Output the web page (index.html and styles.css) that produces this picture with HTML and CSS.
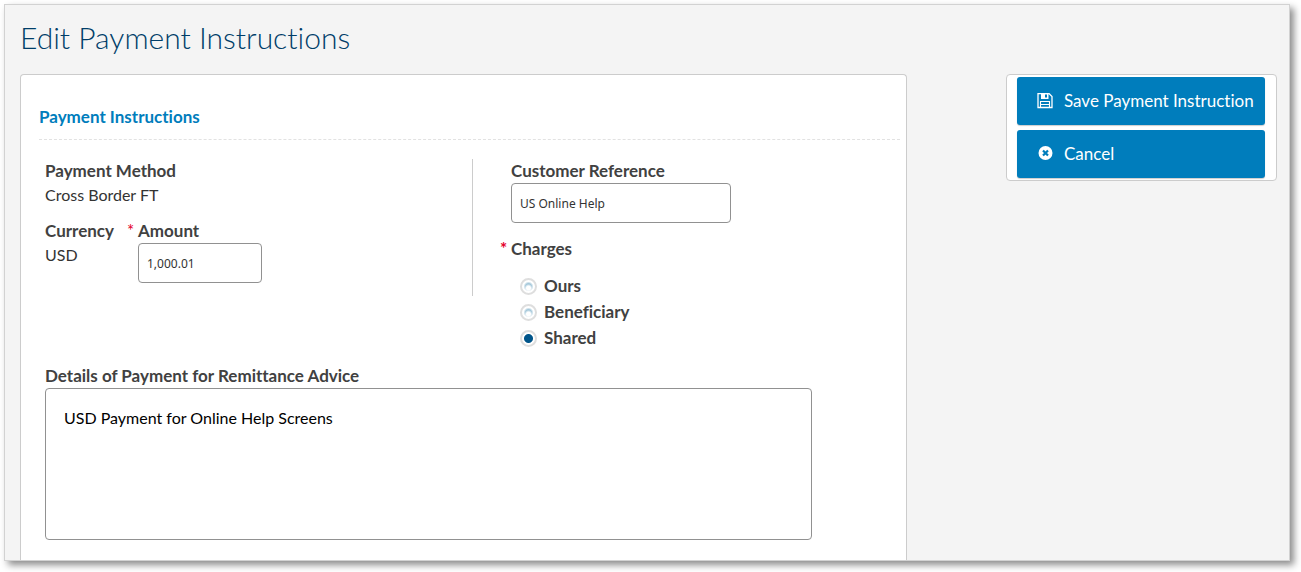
FILE: index.html
```html
<!DOCTYPE html>
<html lang="en">
<head>
<meta charset="utf-8">
<meta name="viewport" content="width=device-width, initial-scale=1">
<title>Edit Payment Instructions</title>
<link rel="stylesheet" href="styles.css">
</head>
<body>
<div class="frame">
  <h1 class="title">Edit Payment Instructions</h1>
  <form class="layout">
    <main class="panel">
      <h2 class="section-title">Payment Instructions</h2>
      <div class="content">
        <div class="columns">
          <div class="col-left">
            <div class="field">
              <span class="label">Payment Method</span>
              <span class="value">Cross Border FT</span>
            </div>
            <div class="money">
              <div class="field currency">
                <span class="label">Currency</span>
                <span class="value">USD</span>
              </div>
              <div class="field required">
                <label class="label" for="amount">Amount</label>
                <input class="input amount" id="amount" type="text" value="1,000.01" required>
              </div>
            </div>
          </div>
          <div class="col-right">
            <div class="field">
              <label class="label" for="reference">Customer Reference</label>
              <input class="input reference" id="reference" type="text" value="US Online Help">
            </div>
            <fieldset class="charges">
              <legend class="label required">Charges</legend>
              <label class="option"><input class="radio" type="radio" name="charges"> Ours</label>
              <label class="option"><input class="radio" type="radio" name="charges"> Beneficiary</label>
              <label class="option"><input class="radio" type="radio" name="charges" checked> Shared</label>
            </fieldset>
          </div>
        </div>
        <div class="field">
          <label class="label" for="details">Details of Payment for Remittance Advice</label>
          <textarea class="details" id="details">USD Payment for Online Help Screens</textarea>
        </div>
      </div>
    </main>
    <aside class="actions">
      <button class="action" type="button">
        <svg class="icon" viewBox="0 0 16 16" aria-hidden="true">
          <path d="M1 0.5H12L15 3.5V14.5H1Z" fill="none" stroke="#fff" stroke-width="1.3"/>
          <path d="M4 0.5H11.5V6H4Z" fill="#fff"/>
          <path d="M8 1.5H10V4.5H8Z" fill="#007dbc"/>
          <path d="M3.5 14.5V8.5H12.5V14.5M4 11.5H12" fill="none" stroke="#fff" stroke-width="1.1"/>
        </svg>
        Save Payment Instruction
      </button>
      <button class="action" type="button">
        <svg class="icon" viewBox="0 0 16 16" aria-hidden="true">
          <circle cx="8.5" cy="7" r="7" fill="#fff"/>
          <path d="M6 4.5L11 9.5M11 4.5L6 9.5" fill="none" stroke="#007dbc" stroke-width="2.2"/>
        </svg>
        Cancel
      </button>
    </aside>
  </form>
</div>
</body>
</html>
```
FILE: styles.css
```css
* {
  box-sizing: border-box;
}

body {
  margin: 0;
  padding: 4px 11px 11px 4px;
  height: 100vh;
  background: #fff;
  color: #333;
  font: 16px/24px Lato, sans-serif;
  font-variant-ligatures: none;
}

.frame {
  display: flex;
  flex-direction: column;
  height: 100%;
  padding: 0 12px 0 15px;
  overflow: hidden;
  background: #f4f4f4;
  border: 1px solid #d2d2d2;
  box-shadow: 4px 4px 7px rgba(0, 0, 0, 0.45);
}

.title {
  margin: 0 0 5px;
  color: #003e69;
  font-size: 30px;
  font-weight: 300;
  line-height: 64px;
}

.layout {
  display: flex;
  flex: 1;
  gap: 99px;
  min-height: 0;
}

.panel {
  flex: 1;
  min-width: 0;
  padding: 30px 6px 0 18px;
  background: #fff;
  border: 1px solid #ccc;
  border-bottom: 0;
  border-radius: 4px 4px 0 0;
}

.section-title {
  margin: 0;
  padding-bottom: 10px;
  border-bottom: 1px dashed #e2e2e2;
  color: #007dbc;
  font-size: 17px;
  font-weight: 700;
  line-height: 24px;
}

.content {
  padding: 19px 88px 0 6px;
}

.columns {
  display: flex;
  height: 205px;
}

.col-left {
  display: flex;
  flex-direction: column;
  gap: 12px;
  width: 428px;
  height: 137px;
  border-right: 1px solid #ccc;
}

.col-right {
  padding-left: 38px;
}

.field {
  display: flex;
  flex-direction: column;
  align-items: flex-start;
}

.label {
  color: #414141;
  font-size: 17px;
  font-weight: 700;
}

.value {
  font-size: 16px;
}

.money {
  display: flex;
}

.currency {
  width: 93px;
}

.required {
  position: relative;
}

.required::before {
  content: "*";
  position: absolute;
  left: -11px;
  top: 0;
  color: #e4002b;
  font-size: 17px;
}

.input {
  height: 40px;
  padding: 0 8px;
  border: 1px solid #919191;
  border-radius: 4px;
  background: #fff;
  color: #333;
  font: 12px/20px "Noto Sans", sans-serif;
}

.amount {
  width: 124px;
}

.reference {
  width: 220px;
}

.charges {
  display: flex;
  flex-direction: column;
  gap: 2px;
  margin: 14px 0 0;
  padding: 0;
  border: 0;
}

.charges .label {
  margin-bottom: 13px;
  padding: 0;
}

.option {
  display: flex;
  align-items: center;
  gap: 7px;
  padding-left: 9px;
  color: #414141;
  font-size: 17px;
  font-weight: 700;
}

.radio {
  appearance: none;
  width: 17px;
  height: 17px;
  margin: 0;
  border: 2px solid #dedede;
  border-radius: 50%;
  background: radial-gradient(circle at 50% 62%, #fff 0 2px, transparent 4px), radial-gradient(circle, #a5c8da 0 3px, #fff 5px);
}

.radio:checked {
  background: radial-gradient(circle, #00558a 0 4px, #fff 5px);
}

.details {
  display: block;
  width: 100%;
  height: 152px;
  padding: 17px 18px;
  border: 1px solid #919191;
  border-radius: 4px;
  resize: none;
  color: #000;
  font: inherit;
}

.actions {
  display: flex;
  flex-direction: column;
  align-self: flex-start;
  gap: 5px;
  width: 271px;
  padding: 2px 11px 2px 10px;
  background: #fff;
  border: 1px solid #ccc;
  border-radius: 4px;
}

.action {
  display: flex;
  align-items: center;
  gap: 11px;
  height: 48px;
  padding: 0 12px 0 20px;
  border: 0;
  border-radius: 3px;
  background: #007dbc;
  box-shadow: 0 1px 1px rgba(0, 0, 0, 0.2);
  color: #fff;
  font: inherit;
  font-size: 17px;
  white-space: nowrap;
}

.icon {
  flex: none;
  width: 16px;
  height: 16px;
}
```
